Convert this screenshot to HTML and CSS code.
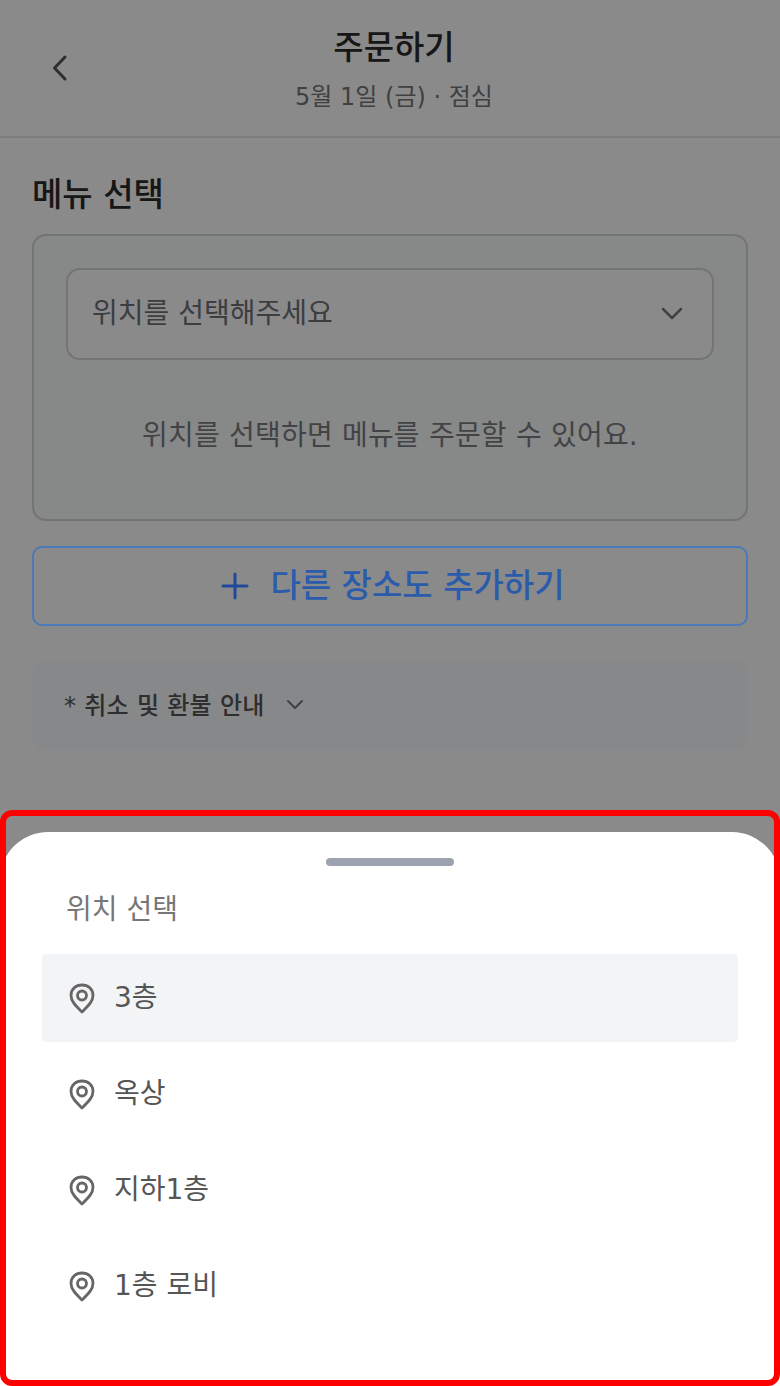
FILE: index.html
```html
<!DOCTYPE html>
<html lang="ko">
<head>
  <meta charset="UTF-8" />
  <meta name="viewport" content="width=device-width, initial-scale=1.0"/>
  <title>주문하기</title>
  <link rel="stylesheet" href="styles.css">
</head>
<body>
  <div class="header">
    <a class="back" href="#">
      <svg width="32" height="32" viewBox="0 0 32 32"><path d="M21 5 L10.500 16 L21 27" /></svg>
    </a>
    <h1>주문하기</h1>
    <p class="date">5월 1일 (금) · 점심</p>
  </div>

  <div class="main">
    <h2>메뉴 선택</h2>
    <div class="card">
      <div class="select">
        <span>위치를 선택해주세요</span>
        <svg width="24" height="24" viewBox="0 0 24 24"><path d="M3 7 L12 16 L21 7" /></svg>
      </div>
      <p class="hint">위치를 선택하면 메뉴를 주문할 수 있어요.</p>
    </div>
    <button class="add-btn" type="button">
      <svg class="plus" width="28" height="28" viewBox="0 0 28 28"><path d="M2 14 H26 M14 2 V26" /></svg>
      <span>다른 장소도 추가하기</span>
    </button>
    <div class="notice">
      <span>* 취소 및 환불 안내</span>
      <svg width="20" height="20" viewBox="0 0 20 20"><path d="M3 6 L10 13 L17 6" /></svg>
    </div>
  </div>

  <!-- bottom sheet -->
  <div class="overlay"></div>
  <div class="sheet">
    <div class="handle"></div>
    <div class="sheet-title">위치 선택</div>
    <div class="option active">
      <svg class="pin" width="28" height="32" viewBox="0 0 28 32"><path d="M14 30 C8 24 3 19.500 3 13.500 C3 7 8 3 14 3 C20 3 25 7 25 13.500 C25 19.500 20 24 14 30 Z" /><circle cx="14" cy="13.500" r="4.500" /></svg>
      <span>3층</span>
    </div>
    <div class="option">
      <svg class="pin" width="28" height="32" viewBox="0 0 28 32"><path d="M14 30 C8 24 3 19.500 3 13.500 C3 7 8 3 14 3 C20 3 25 7 25 13.500 C25 19.500 20 24 14 30 Z" /><circle cx="14" cy="13.500" r="4.500" /></svg>
      <span>옥상</span>
    </div>
    <div class="option">
      <svg class="pin" width="28" height="32" viewBox="0 0 28 32"><path d="M14 30 C8 24 3 19.500 3 13.500 C3 7 8 3 14 3 C20 3 25 7 25 13.500 C25 19.500 20 24 14 30 Z" /><circle cx="14" cy="13.500" r="4.500" /></svg>
      <span>지하1층</span>
    </div>
    <div class="option">
      <svg class="pin" width="28" height="32" viewBox="0 0 28 32"><path d="M14 30 C8 24 3 19.500 3 13.500 C3 7 8 3 14 3 C20 3 25 7 25 13.500 C25 19.500 20 24 14 30 Z" /><circle cx="14" cy="13.500" r="4.500" /></svg>
      <span>1층 로비</span>
    </div>
  </div>
  <div class="frame"></div>
</body>
</html>
```

FILE: styles.css
```css
* {
  margin: 0;
  padding: 0;
  box-sizing: border-box;
  font-family: "DejaVu Sans", "Noto Sans CJK KR", sans-serif;
}
html, body {
  height: 1386px;
  overflow: hidden;
}
body {
  position: relative;
  background: #fff;
  color: #222;
}
svg path, svg circle {
  fill: none;
  stroke-linecap: round;
  stroke-linejoin: round;
}
.header {
  position: relative;
  height: 138px;
  padding: 25px 0 0 8px;
  text-align: center;
  border-bottom: 2px solid #e5e5e5;
}
.back {
  position: absolute;
  left: 44px;
  top: 52px;
  display: flex;
}
.back path {
  stroke: #555;
  stroke-width: 3;
}
.header h1 {
  font-size: 33px;
  line-height: 46px;
  font-weight: 500;
  color: #2b2b2b;
}
.date {
  margin-top: 5px;
  font-size: 24px;
  line-height: 42px;
  color: #777;
}
.main {
  padding: 33px 32px 0;
}
.main h2 {
  font-size: 33px;
  line-height: 48px;
  font-weight: 500;
  color: #2b2b2b;
}
.card {
  margin-top: 15px;
  height: 287px;
  padding: 32px;
  border: 2px solid #d4d6d8;
  border-radius: 14px;
  background: #fafbfc;
}
.select {
  height: 92px;
  padding: 0 28px 0 24px;
  display: flex;
  align-items: center;
  justify-content: space-between;
  border: 2px solid #d4d6d8;
  border-radius: 14px;
  background: #fff;
  font-size: 28px;
  color: #6f7276;
}
.select span {
  margin-top: -6px;
}
.select path {
  stroke: #777;
  stroke-width: 2.500;
}
.hint {
  margin-top: 54px;
  text-align: center;
  font-size: 28px;
  line-height: 44px;
  letter-spacing: 0.2px;
  color: #7a7d80;
}
/* sits above the overlay, its blue is not dimmed like the rest */
.add-btn {
  position: relative;
  z-index: 2;
  display: flex;
  align-items: center;
  justify-content: center;
  gap: 21px;
  width: 100%;
  height: 80px;
  margin-top: 25px;
  padding-left: 6px;
  border: 2px solid #4a7ab8;
  border-radius: 10px;
  background: #8a8a8a;
  font-size: 33px;
  font-weight: 500;
  color: #2b5cab;
}
.add-btn span {
  margin-top: -6px;
}
.plus path {
  stroke: #1f4a9c;
  stroke-width: 3;
}
.notice {
  display: flex;
  align-items: center;
  gap: 20px;
  height: 90px;
  margin-top: 34px;
  padding: 0 32px;
  border-radius: 14px;
  background: #fafcfe;
  font-size: 24px;
  letter-spacing: 0.3px;
  font-weight: 500;
  color: #555;
}
.notice span {
  margin-top: -4px;
}
.notice path {
  stroke: #777;
  stroke-width: 2;
}
.overlay {
  position: absolute;
  inset: 0;
  z-index: 1;
  background: rgba(0, 0, 0, 0.46);
}
.sheet {
  position: absolute;
  left: 0;
  right: 0;
  bottom: 0;
  z-index: 3;
  height: 554px;
  padding: 26px 42px 0;
  background: #fff;
  border-radius: 48px 48px 0 0;
}
.handle {
  width: 128px;
  height: 8px;
  margin: 0 auto;
  border-radius: 4px;
  background: #9ca3af;
}
.sheet-title {
  margin-top: 20px;
  padding-left: 24px;
  font-size: 28px;
  line-height: 48px;
  color: #777;
}
.option {
  display: flex;
  align-items: center;
  gap: 18px;
  height: 88px;
  margin-top: 8px;
  padding-left: 26px;
  border-radius: 4px;
  font-size: 28px;
  color: #555;
}
.option span {
  margin-top: -6px;
}
.sheet-title + .option {
  margin-top: 20px;
}
.option.active {
  background: #f3f4f6;
}
.pin path, .pin circle {
  stroke: #666;
  stroke-width: 2.800;
}
.frame {
  position: absolute;
  left: 0;
  right: 0;
  top: 810px;
  bottom: 0;
  z-index: 4;
  border: 6px solid #ff0000;
  border-radius: 12px;
  pointer-events: none;
}
```
